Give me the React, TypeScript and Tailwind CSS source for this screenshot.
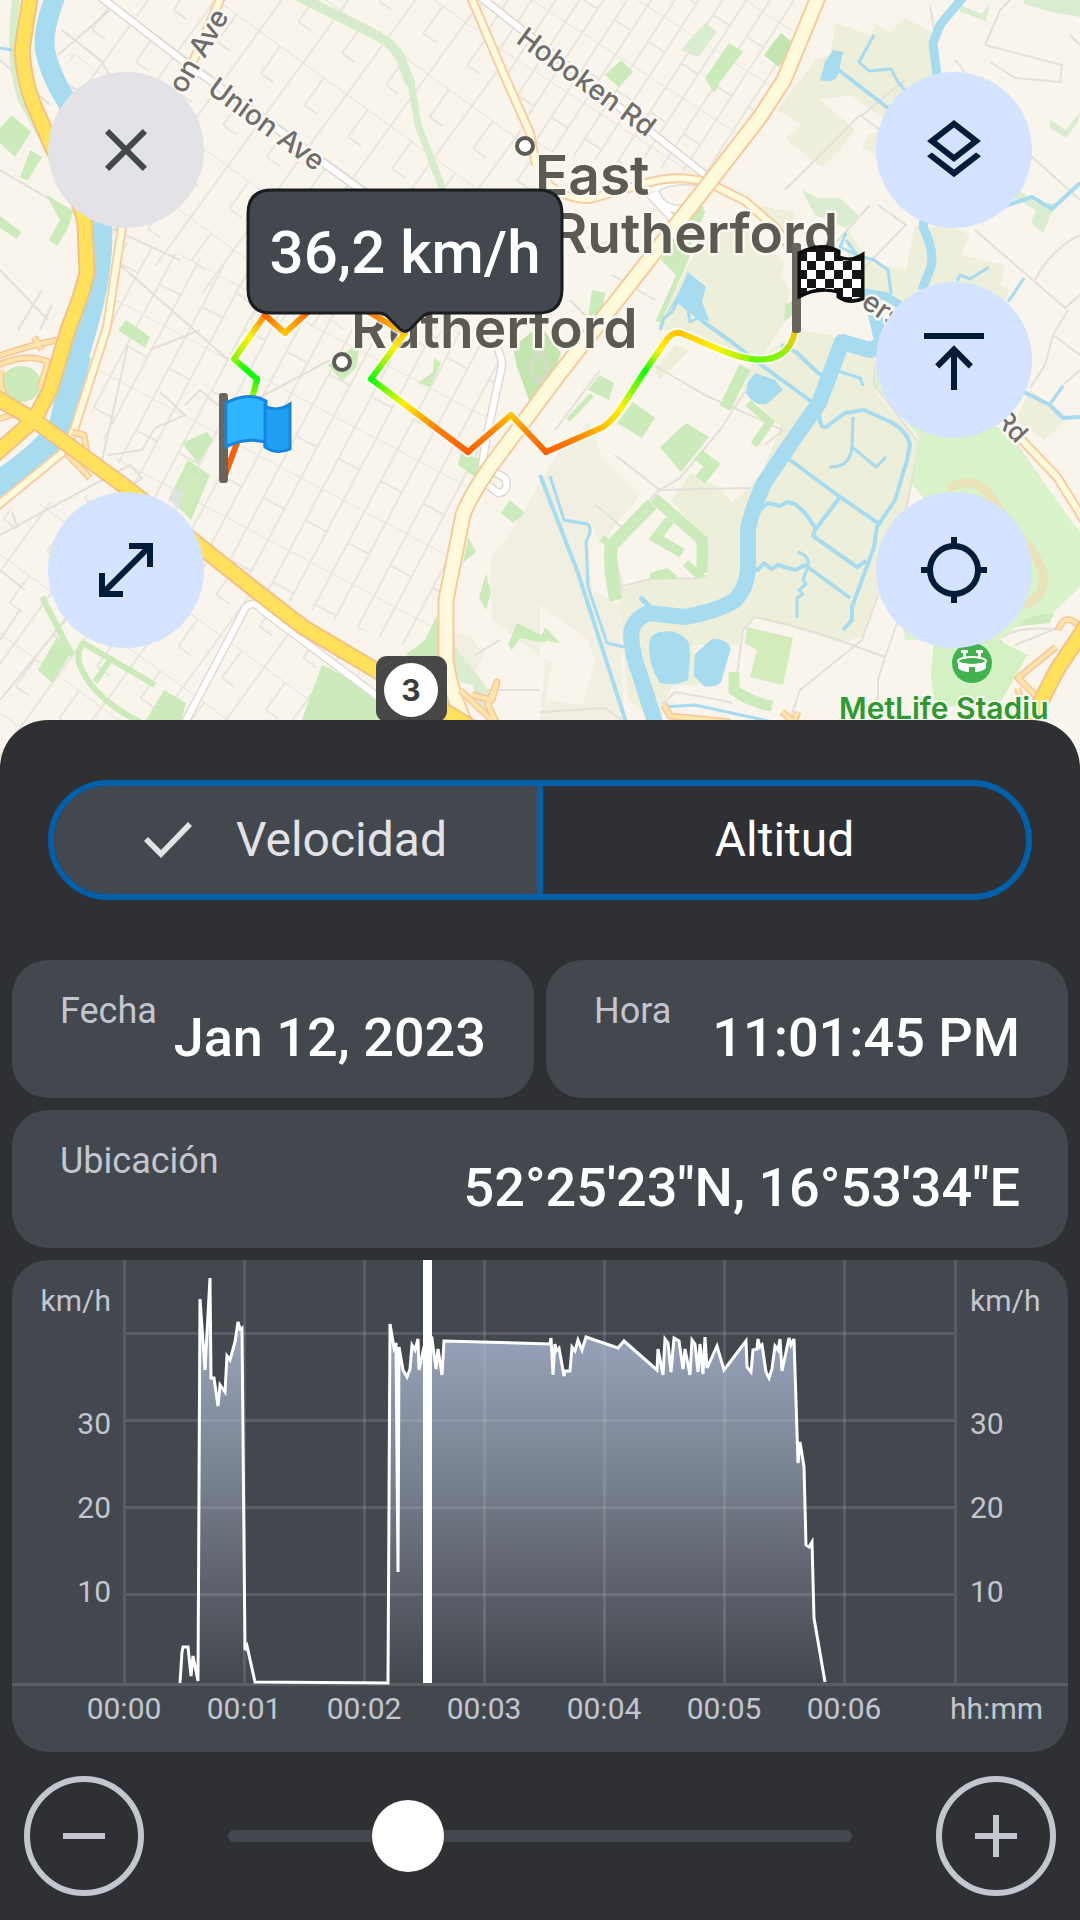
import { clsx } from 'clsx'
import { useState } from 'react'
import type { ReactNode } from 'react'

// Types
interface RouteSegment {
  d: string
  from: [number, number]
  to: [number, number]
  colors: string[]
}

interface InfoCardProps {
  label: string
  value: string
  containerStyles?: string
}

interface MapButtonProps {
  title: string
  containerStyles: string
  children: ReactNode
}

const RED = '#ff5f00'
const ORANGE = '#ff8000'
const AMBER = '#ffc400'
const YELLOW = '#fff200'
const LIME = '#8cf500'
const GREEN = '#0dff00'

// Route coloured by speed
const routeSegments: RouteSegment[] = [
  { d: 'M224 478L238 440', from: [224, 478], to: [238, 440], colors: [RED, RED] },
  { d: 'M238 440L253 395', from: [238, 440], to: [253, 395], colors: [RED, YELLOW, LIME] },
  { d: 'M253 395L257 379', from: [253, 395], to: [257, 379], colors: [LIME, GREEN] },
  { d: 'M257 379L234 359', from: [257, 379], to: [234, 359], colors: [GREEN, GREEN, LIME] },
  { d: 'M234 359L265 315', from: [234, 359], to: [265, 315], colors: [LIME, YELLOW, ORANGE] },
  { d: 'M265 315L285 333', from: [265, 315], to: [285, 333], colors: [RED, AMBER] },
  { d: 'M285 333L310 310', from: [285, 333], to: [310, 310], colors: [AMBER, RED] },
  { d: 'M360 307L405 333', from: [360, 307], to: [405, 333], colors: [RED, AMBER] },
  { d: 'M405 333L371 379', from: [405, 333], to: [371, 379], colors: [AMBER, YELLOW, LIME, GREEN] },
  { d: 'M371 379L468 452', from: [371, 379], to: [468, 452], colors: [GREEN, YELLOW, ORANGE, RED] },
  { d: 'M468 452L511 415', from: [468, 452], to: [511, 415], colors: [RED, ORANGE, AMBER] },
  { d: 'M511 415L546 452', from: [511, 415], to: [546, 452], colors: [AMBER, ORANGE, RED] },
  { d: 'M546 452L603 427', from: [546, 452], to: [603, 427], colors: [RED, ORANGE, AMBER] },
  { d: 'M603 427Q612 421 621 408', from: [603, 427], to: [621, 408], colors: [AMBER, YELLOW] },
  { d: 'M621 408L645 371', from: [621, 408], to: [645, 371], colors: [YELLOW, GREEN] },
  { d: 'M645 371L665 342Q672 331 680 333', from: [645, 371], to: [677, 333], colors: [GREEN, YELLOW, AMBER] },
  { d: 'M680 333C700 340 728 356 752 359', from: [680, 333], to: [752, 359], colors: [AMBER, YELLOW, LIME] },
  { d: 'M752 359C776 362 792 352 795 330', from: [752, 359], to: [796, 330], colors: ['#64f800', LIME, AMBER] }
]

const parks = [
  '12,115 31,132 15,157 0,143 0,128',
  '30,150 42,157 28,180 20,178',
  '0,216 21,232 17,239 0,228',
  '46,194 73,212 68,228 57,246 49,240 60,220',
  '126,320 150,337 145,348 118,330',
  '207,432 213,440 198,463 182,443',
  '188,460 210,475 191,520 169,498',
  '57,637 71,653 52,683 38,670',
  '164,690 186,703 179,730 140,730',
  '322,665 379,693 385,730 298,730',
  '437,615 440,662 405,655 425,640',
  '461,453 482,460 475,477 458,465',
  '510,500 525,513 513,523 501,513',
  '486,573 491,593 486,610 479,598',
  '468,537 476,552 463,563',
  '517,623 545,637 545,643 520,638 512,650 508,645',
  '434,358 441,363 430,387 418,383 433,372',
  '328,365 360,342 356,368 342,381',
  '729,43 743,52 720,82 714,93 705,78',
  '621,60 633,72 619,87 605,75',
  '688,213 702,203 705,212 691,245 676,275 661,260',
  '592,290 605,293 602,313 588,317',
  '599,375 614,383 609,400 588,390',
  '633,402 655,418 642,438 617,423',
  '686,423 709,437 681,472 660,447',
  '545,627 560,643 540,640',
  '650,573 667,568 677,576 676,579 650,579',
  '688,560 707,577 696,578 683,566',
  '1010,618 1057,603 1050,623 1012,627',
  '785,305 797,298 796,312 784,322'
]

const lightParks = [
  '705,23 717,32 698,57 681,50',
  '1024,0 1080,0 1080,17 1050,12 1024,4',
  '960,5 982,14 990,3 986,22 960,11',
  '802,190 818,198 840,198 860,217 846,228 815,215',
  '1015,187 1036,203 1056,203 1043,233 1031,222 1036,210 1010,196',
  '1050,120 1066,130 1080,112 1078,122 1066,138 1050,128',
  '472,675 490,693 488,712 475,705',
  '447,640 470,665 488,690 455,680'
]

const streams = [
  'M874 35L859 62L869 71L891 69L898 82L905 90',
  'M1024 278L1008 302M957 281L960 275L970 279L989 267',
  'M678 300L672 312L664 318L660 330M678 300L688 310L690 322L698 318',
  'M846 233L840 247L857 255L874 260L888 270L891 293L878 300M846 240L857 255',
  'M853 417L852 447Q850 468 829 467M852 447L876 467L886 457',
  'M798 552Q810 556 808 566L803 580L806 584L799 590L803 594L797 598V606L797 618',
  'M550 476L564 520Q580 523 588 524Q593 530 586 541L588 587L607 643L624 647',
  'M664 707L695 705L764 720L790 726',
  'M838 371L860 378L863 386M1063 386L1050 404',
  'M0 48L12 50'
]

const channels = [
  'M836 68L888 108',
  'M1005 206L1032 197L1052 209L1080 183',
  'M688 308L705 323L733 343L764 367L812 402M781 345L796 352L815 370L822 376',
  'M1020 390L1050 405L1063 418L1080 417',
  'M819 412Q820 434 830 424L845 413L864 410L891 422Q908 432 910 445L907 460L895 500L877 527L874 547L852 607V620L843 630',
  'M786 457L840 497L881 525M840 497L815 530L813 536L857 567L866 561',
  'M760 510L768 503L780 506L787 502L795 504L805 513L817 530',
  'M753 567L758 570L764 563L771 569L778 565L795 570L805 565L850 598',
  'M540 475L578 573L626 722'
]

// Residential streets that do not follow the regular grid
const streets = [
  'M62 30L100 60L175 175M58 55L110 10M68 85L150 130',
  'M0 60L50 105M0 170L60 205L180 260',
  'M0 270L48 320M18 330L42 290M52 305L40 330',
  'M120 265L240 370M128 345L100 470M150 350L200 330',
  'M160 392L185 415L155 428L142 450L108 455M0 535L130 465L142 478L128 490',
  'M185 405L200 390L260 440M255 400L330 360',
  'M0 570L25 590M12 512L18 528M0 700L90 590M20 610L0 640',
  'M645 360L705 395L783 430L765 445M555 430L600 370M615 455L660 490L749 488',
  'M655 493L680 478L720 430L746 390M596 505L625 530',
  'M620 587L650 579L700 578L707 560V540L654 495L614 548L622 590',
  'M860 117L905 80M785 190L860 115L880 130M870 205L820 260L850 282L906 225L878 205',
  'M935 35L930 5M985 45L1062 65L1060 82L1015 78L990 62M975 90L960 65L955 60',
  'M985 45L1000 10L1010 0M1070 35L1080 45M1030 155L1080 200',
  'M975 230L1065 308L1080 295M1035 280Q1050 250 1080 235M1068 310L1053 335L1045 365L1030 388M1053 335L1080 355M1080 370L1063 385',
  'M735 690L743 630L755 617L790 625L830 637L885 657M905 515L919 443L874 385L875 365',
  'M905 515L880 590L862 640L800 690L790 720M900 615L885 657L878 680V720M662 705L675 692L720 700L732 703',
  'M540 712L605 708L625 722M450 640L480 690L540 690M475 655L500 640',
  'M1000 640L1010 655L1028 655M1015 645L1060 627M1003 637Q1020 625 1060 630',
  'M580 250L615 240M570 300L600 330M612 275L655 300',
  'M1015 443L1080 535M1080 583L1040 620'
]

const chartLine =
  '168,423 170,392 171,387 176,387 179,416 181,396 186,421 188,39 193,110 198,18 199,118 202,118 206,146 208,125 213,132 215,96 218,100 223,82 226,62 228,69 230,68 233,390 235,386 243,422 376,423 378,64 382,88 384,83 386,312 387,87 391,110 395,117 398,109 400,85 403,90 406,79 407,110 412,87 420,79 424,109 426,89 430,115 432,81 538,84 539,78 541,115 543,84 544,91 547,88 552,116 553,111 558,111 560,87 563,91 566,80 570,90 574,77 606,88 612,81 645,110 646,89 651,115 653,79 656,83 659,112 662,78 667,81 671,109 673,89 678,115 680,80 683,84 686,112 688,84 691,114 693,77 695,108 705,86 712,110 734,81 735,107 739,112 741,90 745,89 746,79 748,87 750,85 754,112 757,118 760,109 763,86 766,90 768,79 770,111 777,78 779,85 782,79 786,203 788,182 792,207 794,285 797,287 800,282 802,358 813,422'

const hours = ['00:00', '00:01', '00:02', '00:03', '00:04', '00:05', '00:06']

const speeds = [
  { text: 'km/h', y: 51 },
  { text: '30', y: 174 },
  { text: '20', y: 258 },
  { text: '10', y: 342 }
]

const FLAG_SHAPE = 'M226 403Q248 391 266 401V407Q278 412 290 404V449Q277 455 265 447V442Q245 437 226 447Z'

const RouteLine = () => (
  <g fill="none" strokeLinejoin="round">
    {routeSegments.map((s) => (
      <path key={s.d} d={s.d} stroke="#fff" strokeOpacity={0.7} strokeWidth={10} strokeLinecap="round" />
    ))}
    {routeSegments.map((s, i) => (
      <g key={s.d}>
        <linearGradient
          id={`route-${i}`}
          gradientUnits="userSpaceOnUse"
          x1={s.from[0]}
          y1={s.from[1]}
          x2={s.to[0]}
          y2={s.to[1]}
        >
          {s.colors.map((color, j) => (
            <stop key={j} offset={j / (s.colors.length - 1)} stopColor={color} />
          ))}
        </linearGradient>
        <path d={s.d} stroke={`url(#route-${i})`} strokeWidth={6} strokeLinecap="round" />
      </g>
    ))}
  </g>
)

const StartFlag = () => (
  <g>
    <rect x={219} y={393} width={9} height={90} rx={3} fill="#69655e" />
    <path d={FLAG_SHAPE} fill="#2db5ff" />
    <path d="M265 407Q278 412 290 404V449Q277 455 265 447Z" fill="#219ff2" />
    <path d={FLAG_SHAPE} fill="none" stroke="#1685e0" strokeWidth={3} />
    <path d="M265 402V446" stroke="#1685e0" strokeWidth={3} />
  </g>
)

const FinishFlag = () => (
  <g transform="translate(573 -150)">
    <rect x={219} y={393} width={9} height={90} rx={3} fill="#69655e" />
    <clipPath id="flag-inner">
      <path d="M228 405Q248 393 264 402V408Q278 414 288 408V447Q278 452 267 445V441Q245 435 228 444Z" />
    </clipPath>
    <path d={FLAG_SHAPE} fill="#161616" stroke="#0d0d0d" strokeWidth={3} />
    <g clipPath="url(#flag-inner)" fill="#fff">
      {[0, 1, 2, 3, 4, 5].map((row) =>
        [0, 1, 2, 3, 4, 5, 6].map((col) =>
          (row + col) % 2 === 1 ? (
            <rect key={`${row}-${col}`} x={225 + col * 9} y={402 + row * 9} width={9} height={9} />
          ) : null
        )
      )}
    </g>
  </g>
)

const TrackMap = () => (
  <svg viewBox="0 0 1080 768" className="w-full font-[Inter,sans-serif]" role="img" aria-label="Mapa de la ruta">
    <defs>
      <pattern id="grid-west" width={54} height={64} patternUnits="userSpaceOnUse" patternTransform="rotate(36)">
        <path d="M0 0H54M12 0V64M38 0V34M38 34H54" fill="none" stroke="#e8e5de" strokeWidth={2} />
      </pattern>
      <pattern id="grid-north" width={40} height={58} patternUnits="userSpaceOnUse" patternTransform="rotate(33)">
        <path d="M0 0H40M6 0V58M26 0V58M6 30H26" fill="none" stroke="#e8e5de" strokeWidth={2} />
      </pattern>
      <pattern id="grid-south" width={48} height={70} patternUnits="userSpaceOnUse" patternTransform="rotate(28)">
        <path d="M0 0H48M10 0V70M34 0V70M34 36H48M0 36H10" fill="none" stroke="#e8e5de" strokeWidth={2} />
      </pattern>
    </defs>

    <rect width={1080} height={768} fill="#f9f5ed" />

    {/* Marsh and industrial ground */}
    <g fill="#edefda">
      <path d="M836 23L870 35L876 24L890 33L905 17L932 33L936 70L945 90L900 130L850 95L820 100L855 130L840 150L822 168L785 138L802 125L777 110L800 80L815 60L830 55Z" />
      <path d="M868 135L905 120L900 170L862 147Z" />
      <path d="M712 222L735 220L785 262L781 277L790 290L783 325L760 360L700 345L658 327L675 290L690 262Z" />
      <path d="M755 205L795 212L790 235L765 225Z" />
      <path d="M846 228L870 262L906 270L915 225L955 228L970 235L960 255L1005 265L1000 285L1010 290L990 330L900 330L870 290L850 285Z" />
      <path d="M753 362L800 330L830 335L884 360L876 393L919 443L915 473L905 515L881 580L864 635L843 643L755 617L742 630L730 690L715 700L690 690L655 720L628 700L618 590L650 579L705 577L707 543L671 500L691 473L719 487L732 503L760 477L781 427L743 387Z" />
      <path d="M1015 420L1030 390L1068 418L1045 440Z" />
      <path d="M655 370L675 345L690 350L660 380Z" />
    </g>
    <path d="M693 645H745L735 690L725 700L665 702L672 685H700Z" fill="#f9f5ed" />
    <g fill="#f1efe2">
      <path d="M490 560L515 525L560 450L590 420L605 470L580 500L588 520L592 590L620 605L624 722H540L545 660L492 620Z" />
      <path d="M450 632L470 635L485 655L470 680L455 660Z" />
      <path d="M560 485L590 445L640 495L600 545L590 520Z" />
    </g>
    <path d="M540 605L588 640L595 662L582 705L546 700L552 662L540 655Z" fill="#f9f5ed" />

    {/* Street grid */}
    <path d="M90 0H470L530 150L555 300L440 340L250 320L110 240L60 90Z" fill="url(#grid-west)" />
    <path d="M475 0H810L775 85L705 175L530 150Z" fill="url(#grid-north)" />
    <path d="M120 240L500 330L500 400L465 500L440 660L260 590L130 480L90 420Z" fill="url(#grid-south)" />
    <path d="M0 510L120 490L370 680L300 768H0Z" fill="url(#grid-west)" />
    <g fill="none" stroke="#e3e0d8" strokeWidth={2}>
      {streets.map((d) => (
        <path key={d} d={d} />
      ))}
    </g>

    {/* Parks */}
    <g fill="#cbebbb">
      {parks.map((points) => (
        <polygon key={points} points={points} />
      ))}
    </g>
    <g fill="#dbedd0">
      {lightParks.map((points) => (
        <polygon key={points} points={points} />
      ))}
    </g>
    <g fill="#c3e5b0">
      <polygon points="781,33 793,43 779,67 764,55" />
      <polygon points="513,347 540,325 561,353 545,395 530,403 517,367" />
    </g>
    <path d="M538 352Q550 358 546 378Q538 386 532 374Q530 362 538 352Z" fill="none" stroke="#d3ddc6" strokeWidth={5} />
    <polygon points="187,472 203,480 189,512 174,500" fill="#d3ebbc" />
    <polygon points="174,487 184,493 179,508 168,500" fill="#dfe3de" />
    <polygon points="747,627 793,638 783,685 750,677 757,650 745,643" fill="#d4ecbc" />
    <path d="M919 437L875 385V365L960 390L1015 443L1080 533V587L1053 613L1029 617L1000 640H905L895 560L925 500L912 483Z" fill="#d9f3cb" />
    <path d="M948 489Q968 476 985 489L1015 530Q1046 565 1044 582Q1040 602 1020 605" fill="none" stroke="#eae3b9" strokeWidth={9} />
    <path d="M934 640H998L1027 655L998 707L935 706L931 675Z" fill="#d3f1c3" />
    <g fill="none" stroke="#cbebbb">
      <path d="M298 -4L370 32Q396 44 402 62L411 85" stroke="#d6ecca" strokeWidth={10} />
      <path d="M411 82L418 125L445 195" stroke="#d6ecca" strokeWidth={7} />
      <path d="M16 0Q8 60 22 100L50 150" stroke="#d6ecca" strokeWidth={8} />
      <path d="M42 597L72 655M155 685L83 643Q74 655 82 670Q96 700 140 722M110 660L95 682" strokeWidth={6} />
      <path d="M690 250L658 322" strokeWidth={5} />
      <path d="M745 367L725 408" strokeWidth={12} />
      <path d="M748 403L770 422L754 445" strokeWidth={8} />
      <path d="M592 395L568 420" strokeWidth={5} />
      <path d="M698 455L712 465L700 480" strokeWidth={12} />
      <path d="M654 498L702 540V573" strokeWidth={11} />
      <path d="M652 504L611 546Q609 570 616 600" strokeWidth={13} />
      <path d="M670 520L656 538L682 553" strokeWidth={10} />
      <path d="M602 538L612 547" strokeWidth={7} />
      <path d="M734 672V690Q750 702 772 706" strokeWidth={11} />
      <path d="M205 40L195 62" strokeWidth={5} />
    </g>

    {/* Water */}
    <g fill="none" stroke="#a6dbf0" strokeLinejoin="round">
      <path d="M57 -8Q42 30 45 50Q50 75 66 100Q96 160 102 228Q104 270 88 325L72 382" strokeWidth={20} />
      <path d="M78 355L62 425Q45 455 -8 488" strokeWidth={26} />
      <path d="M964 -4L940 25L933 43L937 75L946 110L930 180L923 227Q937 255 929 272L922 290" strokeWidth={9} />
      <path d="M900 338L870 350L842 342L829 377L819 403L791 443L764 483Q750 515 748 530V570Q746 590 734 601Q715 612 685 617L648 613Q632 620 631 635Q632 655 640 675L655 722" strokeWidth={16} />
      <path d="M874 310L882 345" strokeWidth={14} />
      <path d="M862 292L885 296L900 305" strokeWidth={8} />
      <path d="M640 597L650 607" strokeWidth={5} />
      {channels.map((d) => (
        <path key={d} d={d} strokeWidth={4} />
      ))}
      {streams.map((d) => (
        <path key={d} d={d} strokeWidth={3} />
      ))}
    </g>
    <g fill="#a6dbf0">
      <path d="M833 50L843 52L838 75Q834 84 820 80L825 62Z" />
      <path d="M688 272L706 287L702 302L710 322L690 312L676 302L664 318L680 290Z" />
      <path d="M755 373L775 380L783 390L768 403Q755 408 746 393L748 382Z" />
      <path d="M649 650Q648 634 660 632Q680 628 689 643L690 658L688 680Q676 686 660 683Q650 668 649 650Z" />
      <path d="M712 639Q726 638 731 648L721 682Q716 688 704 686L694 676L695 654Z" />
    </g>

    {/* Secondary roads */}
    <g fill="none" strokeLinejoin="round">
      <g stroke="#dedad3" strokeWidth={9}>
        <path d="M98 -5L182 60L365 193M478 -5L709 178M654 190Q668 178 700 182M650 195L672 218M655 192Q665 215 690 207" />
        <path d="M182 728L246 607Q255 600 262 610L385 702M483 325Q502 350 502 366L488 430L482 465L505 478Q510 492 498 493L488 485" />
      </g>
      <g stroke="#fff" strokeWidth={6}>
        <path d="M98 -5L182 60L365 193M478 -5L709 178M654 190Q668 178 700 182M650 195L672 218M655 192Q665 215 690 207" />
        <path d="M182 728L246 607Q255 600 262 610L385 702M483 325Q502 350 502 366L488 430L482 465L505 478Q510 492 498 493L488 485" />
      </g>
      <g stroke="#f5cfa3" strokeWidth={10}>
        <path d="M222 -5L192 64M470 -5L505 77L530 133L536 165M540 175Q560 200 590 199L650 182Q680 174 709 183L745 201L775 227L792 250" />
        <path d="M126 200L107 327L74 430L62 453L-4 507M1018 436L1057 477L1084 520" />
      </g>
      <g stroke="#fffadb" strokeWidth={6}>
        <path d="M222 -5L192 64M470 -5L505 77L530 133L536 165M540 175Q560 200 590 199L650 182Q680 174 709 183L745 201L775 227L792 250" />
        <path d="M126 200L107 327L74 430L62 453L-4 507M1018 436L1057 477L1084 520" />
      </g>
      <path d="M819 -5L784 80L760 117L709 183L557 377L490 467Q468 500 463 515L446 600V660Q450 690 467 728" stroke="#f5cb9b" strokeWidth={17} />
      <path d="M819 -5L784 80L760 117L709 183L557 377L490 467Q468 500 463 515L446 600V660Q450 690 467 728" stroke="#fffadb" strokeWidth={13} />
    </g>

    {/* Highways and ramps */}
    <ellipse cx={21} cy={384} rx={20} ry={18} fill="#cbebbb" />
    <g fill="none" strokeLinejoin="round">
      <g stroke="#f7c795" strokeWidth={7}>
        <path d="M-4 357Q30 345 58 340M-4 366Q28 352 48 362L40 388M34 337L42 350M2 370Q-4 385 12 408M-4 420L20 412" />
        <path d="M72 432L84 435L86 448L68 455L90 478M460 690L500 728M472 695L492 700L497 682L488 705L500 730M1040 700L1018 678L1056 647M1058 630Q1065 612 1078 625M1018 688L1022 710" />
        <path d="M664 705L670 716L730 722M782 712L794 722L798 712" />
      </g>
      <g stroke="#ffe4ab" strokeWidth={4}>
        <path d="M-4 357Q30 345 58 340M-4 366Q28 352 48 362L40 388M34 337L42 350M2 370Q-4 385 12 408M-4 420L20 412" />
        <path d="M72 432L84 435L86 448L68 455L90 478M460 690L500 728M472 695L492 700L497 682L488 705L500 730M1040 700L1018 678L1056 647M1058 630Q1065 612 1078 625M1018 688L1022 710" />
        <path d="M664 705L670 716L730 722M782 712L794 722L798 712" />
      </g>
      <g stroke="#f3c184" strokeWidth={17}>
        <path d="M31 -8L22 50Q24 80 33 103L52 147Q82 200 85 225L87 273Q82 295 69 327L50 390L34 420L-8 457" />
        <path d="M-8 395L34 420L127 488L255 590L303 627L448 713L500 745M1090 620L1057 670L1030 722" />
      </g>
      <g stroke="#ffe15c" strokeWidth={13}>
        <path d="M31 -8L22 50Q24 80 33 103L52 147Q82 200 85 225L87 273Q82 295 69 327L50 390L34 420L-8 457" />
        <path d="M-8 395L34 420L127 488L255 590L303 627L448 713L500 745M1090 620L1057 670L1030 722" />
      </g>
    </g>

    {/* Place and street names */}
    <g fill="#6e6d6b" stroke="#fbf8f2" strokeWidth={5} paintOrder="stroke" strokeLinejoin="round" fontSize={28} fontWeight={500}>
      <text transform="translate(206 92) rotate(36)">Union Ave</text>
      <text transform="translate(184 95) rotate(-60)">on Ave</text>
      <text transform="translate(515 42) rotate(36)">Hoboken Rd</text>
      <text transform="translate(860 306) rotate(34)">ers</text>
      <text transform="translate(994 421) rotate(46)" fontSize={26}>
        Rd
      </text>
    </g>
    <g fill="#5d5a52" stroke="#fbf8f2" strokeWidth={5} paintOrder="stroke" strokeLinejoin="round" fontSize={55} fontWeight={600}>
      <text x={535} y={195}>East</text>
      <text x={838} y={253} textAnchor="end">Rutherford</text>
      <text x={351} y={348}>Rutherford</text>
    </g>
    <g fill="#fff" stroke="#5c5b59" strokeWidth={4}>
      <circle cx={525} cy={146} r={8} />
      <circle cx={342} cy={362} r={8} />
    </g>

    <circle cx={972} cy={663} r={20} fill="#42b24f" />
    <g fill="#fff">
      <ellipse cx={972} cy={661} rx={14} ry={4} fill="none" stroke="#fff" strokeWidth={2} />
      <path d="M958 662Q972 670 986 662V668Q982 672 975 672V667H969V672Q962 672 958 668Z" />
      <path d="M961 650H968V653H966V659H963V653H961ZM976 650H983V653H981V659H978V653H976Z" />
    </g>
    <text x={839} y={719} fill="#2f982f" stroke="#f4fbef" strokeWidth={4} paintOrder="stroke" fontSize={30} fontWeight={600}>
      MetLife Stadiu
    </text>

    <rect x={376} y={656} width={71} height={66} rx={11} fill="#474747" />
    <circle cx={411} cy={690} r={27} fill="#fff" />
    <text x={411} y={701} textAnchor="middle" fill="#3c3c3c" fontSize={30} fontWeight={700}>
      3
    </text>

    <RouteLine />
    <StartFlag />
    <FinishFlag />

    {/* Speed bubble */}
    <path
      d="M272 190H538Q562 190 562 214V289Q562 313 538 313H432Q426 313 422 317L410 329Q405 334 400 329L388 317Q384 313 378 313H272Q248 313 248 289V214Q248 190 272 190Z"
      fill="#43474e"
      stroke="#1a1c1e"
      strokeWidth={3}
    />
    <text x={405} y={273} textAnchor="middle" fill="#fff" fontSize={60} fontWeight={500} className="font-[Roboto,sans-serif]">
      36,2 km/h
    </text>
  </svg>
)

const MapButton = ({ title, containerStyles, children }: MapButtonProps) => (
  <button
    type="button"
    aria-label={title}
    className={clsx('flex size-39 items-center justify-center rounded-full', containerStyles)}
  >
    <svg viewBox="0 0 24 24" className="size-18" fill="currentColor">
      {children}
    </svg>
  </button>
)

const InfoCard = ({ label, value, containerStyles }: InfoCardProps) => (
  <div className={clsx('flex justify-between rounded-[36px] bg-[#43474e] px-12 pt-[30px] pb-7', containerStyles)}>
    <dt className="text-4xl leading-[42px] text-[#c3c6cf]">{label}</dt>
    <dd className="mt-4 text-[54px] leading-16 font-medium whitespace-nowrap text-white">{value}</dd>
  </div>
)

const SpeedChart = () => (
  <svg viewBox="0 0 1056 492" className="w-full" role="img" aria-label="Velocidad por tiempo">
    <defs>
      <linearGradient id="speed-fill" gradientUnits="userSpaceOnUse" x1={0} y1={18} x2={0} y2={424}>
        <stop offset="0" stopColor="#a0abc4" />
        <stop offset="0.15" stopColor="#96a1b8" />
        <stop offset="0.52" stopColor="#757f8c" />
        <stop offset="0.58" stopColor="#6f7482" />
        <stop offset="1" stopColor="#43474e" />
      </linearGradient>
    </defs>
    <polygon points={`${chartLine} 813,424 168,424`} fill="url(#speed-fill)" />
    <g stroke="#c3c6cf" strokeOpacity={0.18} strokeWidth={3}>
      {[112.5, 232.5, 352.5, 472.5, 592.5, 712.5, 832.5, 943.5].map((x) => (
        <path key={x} d={`M${x} 0V423`} />
      ))}
      {[73.5, 160.5, 247.5, 334.5].map((y) => (
        <path key={y} d={`M114 ${y}H942`} />
      ))}
      <path d="M0 424.5H1056" />
    </g>
    <polyline points={chartLine} fill="none" stroke="#fff" strokeWidth={3} />
    <rect x={411} y={0} width={9} height={423} fill="#fff" />
    <g fill="#c3c6cf" fontSize={30}>
      {speeds.map(({ text, y }) => (
        <g key={text}>
          <text x={99} y={y} textAnchor="end">
            {text}
          </text>
          <text x={958} y={y}>
            {text}
          </text>
        </g>
      ))}
      {hours.map((hour, i) => (
        <text key={hour} x={112 + i * 120} y={459} textAnchor="middle">
          {hour}
        </text>
      ))}
      <text x={1031} y={459} textAnchor="end">
        hh:mm
      </text>
    </g>
  </svg>
)

const App = () => {
  const [tab, setTab] = useState('Velocidad')
  const [position, setPosition] = useState(26)

  return (
    <div className="min-h-screen bg-[#2f3033] font-[Roboto,sans-serif]">
      <div className="relative overflow-hidden">
        <TrackMap />
        <div className="absolute top-18 left-12 flex flex-col gap-66">
          <MapButton title="Cerrar" containerStyles="bg-[#e3e2e6] text-[#43474e]">
            <path d="M19 6.41L17.59 5 12 10.59 6.41 5 5 6.41 10.59 12 5 17.59 6.41 19 12 13.41 17.59 19 19 17.59 13.41 12z" />
          </MapButton>
          <MapButton title="Ampliar" containerStyles="bg-[#d4e3ff] text-[#001c39]">
            <path d="M13 3h8v8h-2V6.4L6.4 19H11v2H3v-8h2v4.6L17.6 5H13z" />
          </MapButton>
        </div>
        <div className="absolute top-18 right-12 flex flex-col gap-[54px]">
          <MapButton title="Capas" containerStyles="bg-[#d4e3ff] text-[#001c39]">
            <path d="M11.99 18.54l-7.37-5.73L3 14.07l9 7 9-7-1.63-1.27zM12 16l7.36-5.73L21 9l-9-7-9 7 1.63 1.27L12 16zm0-11.47L17.74 9 12 13.47 6.26 9 12 4.53z" />
          </MapButton>
          <MapButton title="Norte arriba" containerStyles="bg-[#d4e3ff] text-[#001c39]">
            <path d="M2 3h20v2H2zM11 22V10.93L7.1 14.85 5.7 13.45 12 7.1l6.3 6.35-1.4 1.4L13 10.93V22z" />
          </MapButton>
          <MapButton title="Centrar" containerStyles="bg-[#d4e3ff] text-[#001c39]">
            <circle cx={12} cy={12} r={8} fill="none" stroke="currentColor" strokeWidth={2} />
            <path d="M11 1h2v3h-2zM11 20h2v3h-2zM1 11h3v2H1zM20 11h3v2h-3z" />
          </MapButton>
        </div>
      </div>

      <main className="relative -mt-12 rounded-t-[48px] bg-[#2f3033] pt-15">
        <div className="mx-12 grid h-30 grid-cols-2 overflow-hidden rounded-full border-6 border-[#0060aa] text-5xl">
          {['Velocidad', 'Altitud'].map((name) => (
            <button
              key={name}
              type="button"
              aria-pressed={tab === name}
              onClick={() => setTab(name)}
              className={clsx(
                'flex items-center justify-center gap-11 border-[#0060aa] first:border-r-3 last:border-l-3',
                tab === name ? 'bg-[#43474e] text-[#e3e2e6]' : 'text-white'
              )}
            >
              {tab === name && (
                <svg viewBox="0 0 48 36" className="h-9 w-12" fill="currentColor">
                  <path d="M4 15L17 28L44 0L48 4L17 36L0 19z" />
                </svg>
              )}
              {name}
            </button>
          ))}
        </div>

        <dl className="mt-15 grid grid-cols-2 gap-3 px-3">
          <InfoCard label="Fecha" value="Jan 12, 2023" />
          <InfoCard label="Hora" value="11:01:45 PM" />
          <InfoCard label="Ubicación" value={'52°25\'23"N, 16°53\'34"E'} containerStyles="col-span-2" />
        </dl>

        <div className="mx-3 mt-3 overflow-hidden rounded-[36px] bg-[#43474e]">
          <SpeedChart />
        </div>

        <div className="flex items-center justify-between p-6 text-[#c3c6cf]">
          <button
            type="button"
            aria-label="Retroceder"
            onClick={() => setPosition(Math.max(0, position - 1))}
            className="flex size-30 shrink-0 items-center justify-center rounded-full border-6 border-[#c3c6cf]"
          >
            <svg viewBox="0 0 24 24" className="size-18" fill="currentColor">
              <path d="M5 11h14v2H5z" />
            </svg>
          </button>
          <input
            type="range"
            min={0}
            max={100}
            value={position}
            onChange={(e) => setPosition(Number(e.target.value))}
            aria-label="Posición"
            className="mx-21 h-18 min-w-0 flex-1 appearance-none bg-transparent [&::-webkit-slider-runnable-track]:h-3 [&::-webkit-slider-runnable-track]:rounded-full [&::-webkit-slider-runnable-track]:bg-[#43474e] [&::-webkit-slider-thumb]:-mt-[30px] [&::-webkit-slider-thumb]:size-18 [&::-webkit-slider-thumb]:appearance-none [&::-webkit-slider-thumb]:rounded-full [&::-webkit-slider-thumb]:bg-white"
          />
          <button
            type="button"
            aria-label="Avanzar"
            onClick={() => setPosition(Math.min(100, position + 1))}
            className="flex size-30 shrink-0 items-center justify-center rounded-full border-6 border-[#c3c6cf]"
          >
            <svg viewBox="0 0 24 24" className="size-18" fill="currentColor">
              <path d="M5 11h6V5h2v6h6v2h-6v6h-2v-6H5z" />
            </svg>
          </button>
        </div>
      </main>
    </div>
  )
}

export default App
